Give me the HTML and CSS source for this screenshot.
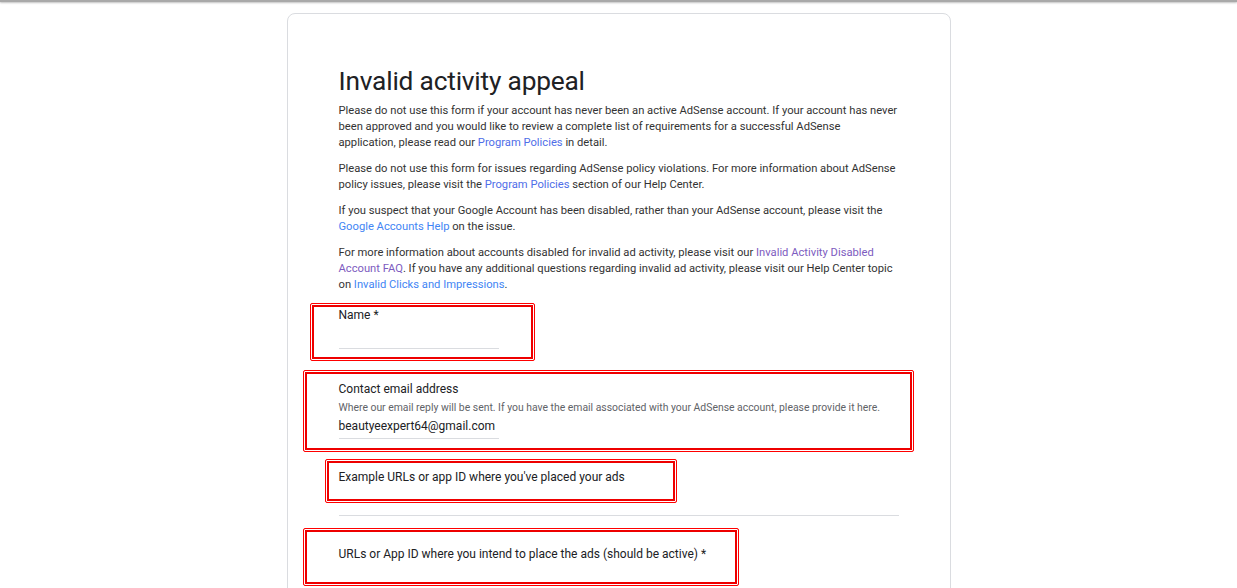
FILE: index.html
```html
<!DOCTYPE html>
<html lang="en">
<head>
<meta charset="utf-8">
<title>Invalid activity appeal</title>
<link rel="stylesheet" href="styles.css">
</head>
<body>
<div class="topbar"></div>
<main class="card">
  <h1 class="title">Invalid activity appeal</h1>
  <p class="intro">Please do not use this form if your account has never been an active AdSense account. If your account has never been approved and you would like to review a complete list of requirements for a successful AdSense application, please read our <a class="link link-indigo" href="#">Program Policies</a> in detail.</p>
  <p class="intro">Please do not use this form for issues regarding AdSense policy violations. For more information about AdSense policy issues, please visit the <a class="link link-indigo" href="#">Program Policies</a> section of our Help Center.</p>
  <p class="intro">If you suspect that your Google Account has been disabled, rather than your AdSense account, please visit the <a class="link" href="#">Google Accounts Help</a> on the issue.</p>
  <p class="intro">For more information about accounts disabled for invalid ad activity, please visit our <a class="link link-visited" href="#">Invalid Activity Disabled Account FAQ</a>. If you have any additional questions regarding invalid ad activity, please visit our Help Center topic on <a class="link" href="#">Invalid Clicks and Impressions</a>.</p>

  <div class="field field-name">
    <span class="mark mark-name"></span>
    <label class="label">Name *</label>
    <div class="input"></div>
  </div>

  <div class="field field-email">
    <span class="mark mark-email"></span>
    <label class="label">Contact email address</label>
    <div class="help">Where our email reply will be sent. If you have the email associated with your AdSense account, please provide it here.</div>
    <div class="input input-filled">beautyeexpert64@gmail.com</div>
  </div>

  <div class="field field-example">
    <span class="mark mark-example"></span>
    <label class="label">Example URLs or app ID where you've placed your ads</label>
    <div class="textarea"></div>
  </div>

  <div class="field field-urls">
    <span class="mark mark-urls"></span>
    <label class="label">URLs or App ID where you intend to place the ads (should be active) *</label>
  </div>
</main>
</body>
</html>
```

FILE: styles.css
```css
html, body {
  margin: 0;
  padding: 0;
  height: 588px;
  overflow: hidden;
  background: #ffffff;
}

body {
  font-family: Roboto, "Liberation Sans", Arial, sans-serif;
  color: #202124;
}

.topbar {
  height: 2px;
  background: #a9a9a9;
  box-shadow: 0 1px 2px rgba(0, 0, 0, 0.25);
}

.card {
  width: 664px;
  margin: 11px auto 0;
  border: 1px solid #dadce0;
  border-radius: 8px;
  padding: 49px 51px 200px;
  box-sizing: border-box;
}

.title {
  margin: 0;
  font-family: Roboto, "Liberation Sans", sans-serif;
  font-weight: 400;
  font-size: 26.3px;
  line-height: 36px;
  color: #202124;
  letter-spacing: -0.2px;
}

.intro {
  margin: 4px 0 10px;
  font-size: 11.2px;
  line-height: 16px;
  color: #333333;
}

.intro + .intro {
  margin-top: 0;
}

.link {
  color: #4285f4;
  text-decoration: none;
}

.link-indigo {
  color: #4f6ee8;
}

.link-visited {
  color: #7d5cc0;
}

.field {
  position: relative;
  display: flex;
  flex-direction: column;
}

.label {
  display: block;
  font-size: 12px;
  line-height: 16px;
  color: #202124;
}

.help {
  font-size: 10.4px;
  line-height: 14px;
  color: #5f6368;
  margin-top: 4px;
}

.input {
  width: 160px;
  height: 24px;
  border-bottom: 1px solid #dadce0;
  margin-top: 1px;
  font-size: 12px;
  line-height: 22px;
  color: #202124;
}

.input-filled {
  height: 23px;
  margin-top: 0;
}

.textarea {
  height: 30px;
  border-bottom: 1px solid #dadce0;
}

.field-name {
  margin-top: 14px;
}

.field-email {
  margin-top: 32px;
}

.field-example {
  margin-top: 30px;
}

.field-urls {
  margin-top: 30px;
}

.mark {
  position: absolute;
  box-sizing: border-box;
  border: 1px solid #ff0000;
  border-radius: 2px;
  box-shadow: inset 0 0 0 1px #ffffff, inset 0 0 0 3px #ee0000;
  pointer-events: none;
}

.mark-name {
  left: -29px;
  top: -4px;
  width: 225px;
  height: 58px;
}

.mark-email {
  left: -36px;
  top: -11px;
  width: 611px;
  height: 82px;
}

.mark-example {
  left: -14px;
  top: -10px;
  width: 352px;
  height: 44px;
}

.mark-urls {
  left: -36px;
  top: -18px;
  width: 436px;
  height: 58px;
}
```
